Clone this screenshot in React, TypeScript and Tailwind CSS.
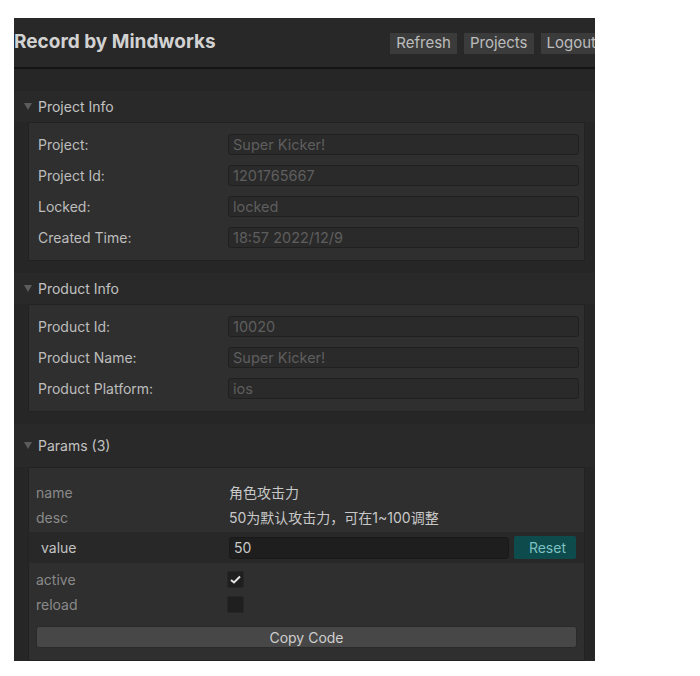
const font = { fontFamily: "Inter, 'Noto Sans CJK SC', sans-serif" }

const SectionHeader = (props: { title: string; className?: string }) => (
	<div
		className={`flex items-center bg-[#292929] pl-[10px] text-[14px] text-[#c2c2c2] ${props.className ?? ""}`}
	>
		<svg width="8" height="7" viewBox="0 0 8 7" className="mr-[6px]">
			<path d="M0 0 H8 L4 7 Z" fill="#5c5c5c" />
		</svg>
		{props.title}
	</div>
)

const FieldRow = (props: { label: string; value: string }) => (
	<div className="flex h-[31px] items-center">
		<div className="w-[190px] text-[14px] text-[#bdbdbd]">{props.label}</div>
		<div className="flex h-[21px] flex-1 items-center rounded-[3px] border border-[#202020] bg-[#2a2a2a] px-[4px] pt-[1px] text-[14.5px] text-[#5e5e5e]">
			{props.value}
		</div>
	</div>
)

const InfoBox = (props: { rows: [string, string][] }) => (
	<div className="ml-[14px] mr-[10px] border border-[#222222] bg-[#2f2f2f] pl-[9px] pr-[5px] pb-[7px] pt-[6px]">
		{props.rows.map(([label, value]) => (
			<FieldRow key={label} label={label} value={value} />
		))}
	</div>
)

const HeaderButton = (props: { label: string }) => (
	<button className="flex h-[21px] items-center bg-[#3b3b3b] px-[6px] text-[15px] text-[#bdbdbd]">
		{props.label}
	</button>
)

const Checkbox = (props: { checked?: boolean }) => (
	<div className="flex h-[17px] w-[17px] items-center justify-center rounded-[2px] border border-[#262626] bg-[#1f1f1f]">
		{props.checked && (
			<svg width="11" height="9" viewBox="0 0 11 9">
				<path d="M1 5 L4 7.5 L10 1.5" fill="none" stroke="#e6e6e6" strokeWidth="2" />
			</svg>
		)}
	</div>
)

export default function App() {
	return (
		<div className="min-h-screen bg-white pl-[14px] pt-[18px]" style={font}>
			<div className="h-[643px] w-[581px] overflow-hidden bg-[#262626]">
				<div className="flex h-[51px] items-center justify-between border-b-2 border-[#141414] bg-[#282828]">
					<div className="text-[19px] font-bold text-[#d2d2d2]">
						Record by Mindworks
					</div>
					<div className="mr-[-7px] mt-[2px] flex gap-[7px]">
						<HeaderButton label="Refresh" />
						<HeaderButton label="Projects" />
						<HeaderButton label="Logout" />
					</div>
				</div>

				<SectionHeader title="Project Info" className="mt-[22px] h-[31px]" />
				<InfoBox
					rows={[
						["Project:", "Super Kicker!"],
						["Project Id:", "1201765667"],
						["Locked:", "locked"],
						["Created Time:", "18:57 2022/12/9"],
					]}
				/>

				<SectionHeader title="Product Info" className="mt-[12px] h-[31px]" />
				<InfoBox
					rows={[
						["Product Id:", "10020"],
						["Product Name:", "Super Kicker!"],
						["Product Platform:", "ios"],
					]}
				/>

				<SectionHeader title="Params (3)" className="mt-[12px] h-[43px]" />
				<div className="ml-[14px] mr-[10px] border border-[#222222] bg-[#2f2f2f] pb-[12px] pt-[12px] text-[14px]">
					<div className="flex h-[25px] items-center pl-[7px]">
						<div className="w-[193px] text-[#8a8a8a]">name</div>
						<div className="text-[#c8c8c8]">角色攻击力</div>
					</div>
					<div className="flex h-[25px] items-center pl-[7px]">
						<div className="w-[193px] text-[#8a8a8a]">desc</div>
						<div className="text-[#c8c8c8]">50为默认攻击力，可在1~100调整</div>
					</div>
					<div className="mt-[2px] flex h-[31px] items-center bg-[#282828] pl-[12px] pr-[8px]">
						<div className="w-[188px] text-[#c2c2c2]">value</div>
						<div className="flex h-[22px] flex-1 items-center rounded-[3px] border border-[#191919] bg-[#1e1e1e] px-[4px] text-[#c8c8c8]">
							50
						</div>
						<button className="ml-[5px] flex h-[23px] w-[62px] items-center justify-end rounded-[2px] bg-[#0e4b4c] pr-[10px] text-[#7cc2c2]">
							Reset
						</button>
					</div>
					<div className="mt-[4px] flex h-[25px] items-center pl-[7px]">
						<div className="w-[191px] text-[#8a8a8a]">active</div>
						<Checkbox checked />
					</div>
					<div className="flex h-[25px] items-center pl-[7px]">
						<div className="w-[191px] text-[#8a8a8a]">reload</div>
						<Checkbox />
					</div>
					<div className="mx-[7px] mt-[9px]">
						<button className="flex h-[22px] w-full items-center justify-center rounded-[3px] border border-[#2a2a2a] bg-[#474747] text-[14px] text-[#cfcfcf]">
							Copy Code
						</button>
					</div>
				</div>
			</div>
		</div>
	)
}
